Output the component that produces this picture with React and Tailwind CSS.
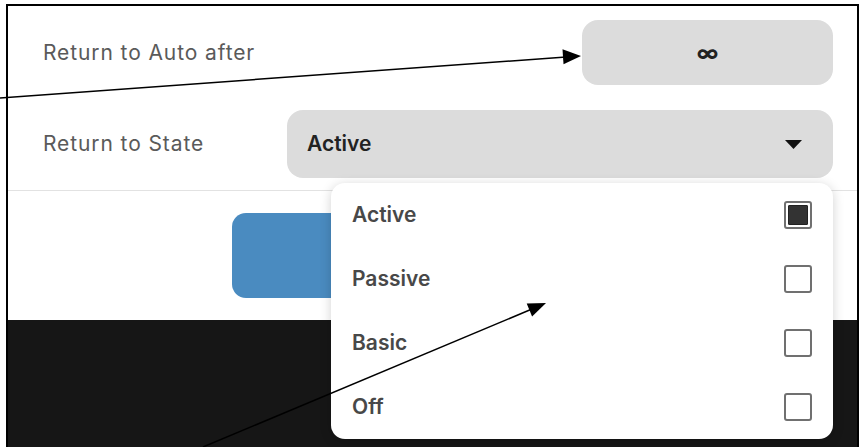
const options = [
  { label: 'Active', checked: true },
  { label: 'Passive', checked: false },
  { label: 'Basic', checked: false },
  { label: 'Off', checked: false },
];

const Checkbox = ({ checked }) => (
  <div className="w-[28px] h-[28px] rounded-[3px] border-2 border-[#707070] p-[2px] bg-white">
    {checked && <div className="w-full h-full bg-[#333] rounded-[1px] border border-[#222]" />}
  </div>
);

const App = () => {
  return (
    <div
      className="relative w-[863px] h-[447px] overflow-hidden bg-white pl-[6px] pt-[4px] pr-[4px]"
      style={{ fontFamily: 'Inter, "Liberation Sans", sans-serif' }}
    >
      <div className="h-full border-2 border-b-0 border-black flex flex-col">
        {/* Settings panel */}
        <div className="h-[314px] bg-white rounded-b-[10px] flex flex-col">
          <div className="mt-[14px] h-[65px] flex items-center">
            <span className="pl-[35px] text-[21px] tracking-[0.9px] text-[#5a5a5a]">Return to Auto after</span>
            <div className="ml-auto mr-[24px] w-[251px] h-full rounded-[16px] bg-[#dcdcdc] flex items-center justify-center">
              <span className="text-[22px] font-bold text-[#222] leading-none">∞</span>
            </div>
          </div>

          <div className="mt-[25px] h-[68px] flex items-center">
            <span className="pl-[35px] text-[21px] tracking-[0.9px] text-[#5a5a5a]">Return to State</span>
            <div className="ml-auto mr-[24px] w-[546px] h-full rounded-[16px] bg-[#dcdcdc] flex items-center pl-[20px] pr-[31px]">
              <span className="text-[21px] font-semibold text-[#222]">Active</span>
              <svg className="ml-auto" width="17" height="9" viewBox="0 0 17 9">
                <path d="M0 0 L17 0 L8.5 9 Z" fill="#111" />
              </svg>
            </div>
          </div>

          <div className="mt-[12px] h-px bg-[#e2e2e2]" />

          <div className="mt-[22px] ml-[224px] w-[420px] h-[85px] rounded-[14px] bg-[#4a8bc0]" />
        </div>

        <div className="flex-1 bg-[#161616]" />
      </div>

      {/* Dropdown menu */}
      <div className="absolute left-[331px] top-[183px] w-[502px] h-[256px] bg-white rounded-[14px] shadow-[0_2px_12px_rgba(0,0,0,0.18)] flex flex-col">
        {options.map((opt) => (
          <div key={opt.label} className="h-[64px] flex items-center pl-[21px] pr-[21px]">
            <span className="text-[21px] font-semibold text-[#484848]">{opt.label}</span>
            <div className="ml-auto">
              <Checkbox checked={opt.checked} />
            </div>
          </div>
        ))}
      </div>

      {/* Annotation arrows */}
      <svg className="absolute inset-0 pointer-events-none" width="863" height="447">
        <line x1="0" y1="98" x2="566" y2="57" stroke="#000" strokeWidth="1.5" />
        <polygon points="581,56 563.5,64.3 562.5,49.3" fill="#000" />
        <line x1="203" y1="447" x2="532" y2="309" stroke="#000" strokeWidth="1.5" />
        <polygon points="546,303 532.1,316.5 526.7,303.5" fill="#000" />
      </svg>
    </div>
  );
};

export default App;
